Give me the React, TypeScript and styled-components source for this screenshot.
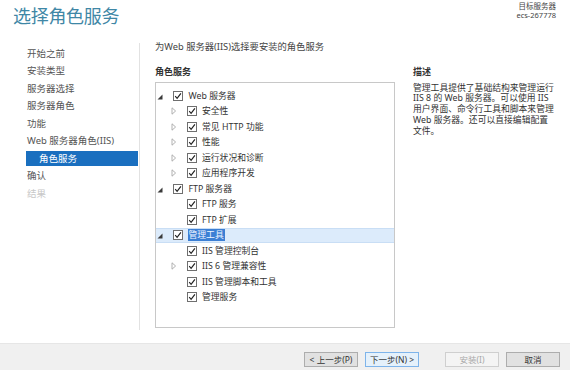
import React from 'react'
import styled, { createGlobalStyle } from 'styled-components'

const GlobalStyle = createGlobalStyle`
  html, body {
    margin: 0;
    padding: 0;
    background: #fff;
  }
  body {
    font-family: "Noto Sans", "Noto Sans CJK SC", sans-serif;
  }
`

interface ITreeNode {
  label: string;
  level: number;
  expander?: 'open' | 'closed';
  selected?: boolean;
}

const navItems = [
  { label: '开始之前' },
  { label: '安装类型' },
  { label: '服务器选择' },
  { label: '服务器角色' },
  { label: '功能' },
  { label: 'Web 服务器角色(IIS)' },
  { label: '角色服务', active: true },
  { label: '确认' },
  { label: '结果', disabled: true },
]

const treeNodes: ITreeNode[] = [
  { label: 'Web 服务器', level: 0, expander: 'open' },
  { label: '安全性', level: 1, expander: 'closed' },
  { label: '常见 HTTP 功能', level: 1, expander: 'closed' },
  { label: '性能', level: 1, expander: 'closed' },
  { label: '运行状况和诊断', level: 1, expander: 'closed' },
  { label: '应用程序开发', level: 1, expander: 'closed' },
  { label: 'FTP 服务器', level: 0, expander: 'open' },
  { label: 'FTP 服务', level: 1 },
  { label: 'FTP 扩展', level: 1 },
  { label: '管理工具', level: 0, expander: 'open', selected: true },
  { label: 'IIS 管理控制台', level: 1 },
  { label: 'IIS 6 管理兼容性', level: 1, expander: 'closed' },
  { label: 'IIS 管理脚本和工具', level: 1 },
  { label: '管理服务', level: 1 },
]

const descLines = [
  '管理工具提供了基础结构来管理运行',
  'IIS 8 的 Web 服务器。可以使用 IIS',
  '用户界面、命令行工具和脚本来管理',
  'Web 服务器。还可以直接编辑配置',
  '文件。',
]

const Window = styled.div`
  width: 570px;
  height: 370px;
  overflow: hidden;
  display: flex;
  flex-direction: column;
  background: #fff;
  color: #333;
`

const Header = styled.div`
  height: 40px;
  display: flex;
  justify-content: space-between;
  align-items: flex-start;
  flex-shrink: 0;
`

const Title = styled.h1`
  margin: 4px 0 0 13px;
  font-family: "Noto Sans CJK SC", sans-serif;
  font-weight: 400;
  font-size: 18px;
  line-height: 22px;
  color: #3f87a6;
  letter-spacing: -0.3px;
`

const ServerInfo = styled.div`
  margin: 2px 14px 0 0;
  text-align: right;
  font-size: 7.5px;
  line-height: 9px;
  color: #444;
`

const Body = styled.div`
  flex: 1;
  display: flex;
  min-height: 0;
`

const Nav = styled.nav`
  width: 139px;
  margin: 3px 0 13px;
  padding-top: 2.8px;
  border-right: 1px solid #e2e2e2;
  flex-shrink: 0;
`

const NavItem = styled.div<{ $active?: boolean; $disabled?: boolean }>`
  height: 15px;
  line-height: 15px;
  margin: 0 1px 2.5px 26px;
  padding-left: ${(p) => (p.$active ? '13px' : '1px')};
  font-size: 9.5px;
  white-space: nowrap;
  background: ${(p) => (p.$active ? '#1a6fbf' : 'transparent')};
  color: ${(p) => (p.$active ? '#fff' : p.$disabled ? '#c8c8c8' : '#555')};
`

const Content = styled.div`
  flex: 1;
  padding-left: 15px;
  display: flex;
  flex-direction: column;
`

const Intro = styled.div`
  font-size: 9.3px;
  line-height: 13px;
  color: #444;
`

const Columns = styled.div`
  display: flex;
  margin-top: 11.5px;
  gap: 18px;
`

const TreeColumn = styled.div`
  width: 240px;
  display: flex;
  flex-direction: column;
`

const DescColumn = styled.div`
  width: 150px;
`

const SectionLabel = styled.div`
  font-size: 9px;
  line-height: 13px;
  font-weight: 700;
  color: #333;
`

const TreeBox = styled.div`
  margin-top: 4.5px;
  height: 246px;
  box-sizing: border-box;
  border: 1px solid #c8c8c8;
  padding-top: 5px;
`

const Row = styled.div<{ $level: number; $selected?: boolean }>`
  height: 15.5px;
  box-sizing: border-box;
  display: flex;
  align-items: center;
  padding-left: ${(p) => 1 + p.$level * 13.5}px;
  background: ${(p) => (p.$selected ? '#dcebfb' : 'transparent')};
  border-top: 1px solid ${(p) => (p.$selected ? '#c9def5' : 'transparent')};
  border-bottom: 1px solid ${(p) => (p.$selected ? '#c9def5' : 'transparent')};
`

const Expander = styled.span`
  width: 16px;
  height: 10px;
  display: flex;
  align-items: center;
  flex-shrink: 0;
`

const CheckBox = styled.span`
  width: 10px;
  height: 10px;
  box-sizing: border-box;
  border: 1px solid #6f6f6f;
  background: #fff;
  display: flex;
  align-items: center;
  justify-content: center;
  flex-shrink: 0;
  margin-right: 4.5px;
`

const Label = styled.span<{ $selected?: boolean }>`
  font-size: 8.8px;
  line-height: 12px;
  white-space: nowrap;
  padding: 0 1px;
  color: ${(p) => (p.$selected ? '#eef4ff' : '#333')};
  background: ${(p) => (p.$selected ? '#3c7fd4' : 'transparent')};
`

const DescText = styled.div`
  margin-top: 5px;
  font-size: 8.8px;
  line-height: 10.8px;
  color: #333;
  white-space: nowrap;
`

const Footer = styled.div`
  height: 27px;
  flex-shrink: 0;
  background: #f0f0f0;
  border-top: 1px solid #e6e6e6;
  box-sizing: border-box;
  display: flex;
  align-items: flex-start;
  padding: 8px 10px 0 0;
  justify-content: flex-end;
`

const Button = styled.button<{ $primary?: boolean; $gap?: number }>`
  width: 54px;
  height: 15px;
  margin-left: ${(p) => p.$gap ?? 7}px;
  padding: 0;
  font-family: "Noto Sans", "Noto Sans CJK SC", sans-serif;
  font-size: 8.5px;
  line-height: 13px;
  color: #333;
  background: ${(p) => (p.$primary ? '#e5f1fb' : '#e1e1e1')};
  border: 1px solid ${(p) => (p.$primary ? '#7eb4ea' : '#adadad')};
  &:disabled {
    background: #f4f4f4;
    border-color: #cfcfcf;
    color: #a8a8a8;
  }
`

function ExpanderIcon({ kind }: { kind?: 'open' | 'closed' }) {
  if (kind === 'open') {
    return (
      <svg width="6" height="6" viewBox="0 0 6 6" style={{ marginTop: 2 }}>
        <path d="M5.5 0.5 V5.5 H0.5 Z" fill="#3a3a3a" />
      </svg>
    )
  }
  if (kind === 'closed') {
    return (
      <svg width="6" height="8" viewBox="0 0 6 8">
        <path d="M1 0.8 L4.6 4 L1 7.2 Z" fill="none" stroke="#a8a8a8" strokeWidth="0.9" />
      </svg>
    )
  }
  return null
}

function Check() {
  return (
    <svg width="8" height="8" viewBox="0 0 8 8">
      <path d="M1.2 4.2 L3.1 6.3 L6.9 1.3" fill="none" stroke="#222" strokeWidth="1.2" />
    </svg>
  )
}

export default function App() {
  return (
    <>
      <GlobalStyle />
      <Window>
        <Header>
          <Title>选择角色服务</Title>
          <ServerInfo>
            <div>目标服务器</div>
            <div>ecs-267778</div>
          </ServerInfo>
        </Header>
        <Body>
          <Nav>
            {navItems.map((item) => (
              <NavItem key={item.label} $active={item.active} $disabled={item.disabled}>
                {item.label}
              </NavItem>
            ))}
          </Nav>
          <Content>
            <Intro>为Web 服务器(IIS)选择要安装的角色服务</Intro>
            <Columns>
              <TreeColumn>
                <SectionLabel>角色服务</SectionLabel>
                <TreeBox>
                  {treeNodes.map((node) => (
                    <Row key={node.label} $level={node.level} $selected={node.selected}>
                      <Expander>
                        <ExpanderIcon kind={node.expander} />
                      </Expander>
                      <CheckBox>
                        <Check />
                      </CheckBox>
                      <Label $selected={node.selected}>{node.label}</Label>
                    </Row>
                  ))}
                </TreeBox>
              </TreeColumn>
              <DescColumn>
                <SectionLabel>描述</SectionLabel>
                <DescText>
                  {descLines.map((line) => (
                    <div key={line}>{line}</div>
                  ))}
                </DescText>
              </DescColumn>
            </Columns>
          </Content>
        </Body>
        <Footer>
          <Button>&lt; 上一步(P)</Button>
          <Button $primary>下一步(N) &gt;</Button>
          <Button disabled $gap={26}>安装(I)</Button>
          <Button>取消</Button>
        </Footer>
      </Window>
    </>
  )
}
